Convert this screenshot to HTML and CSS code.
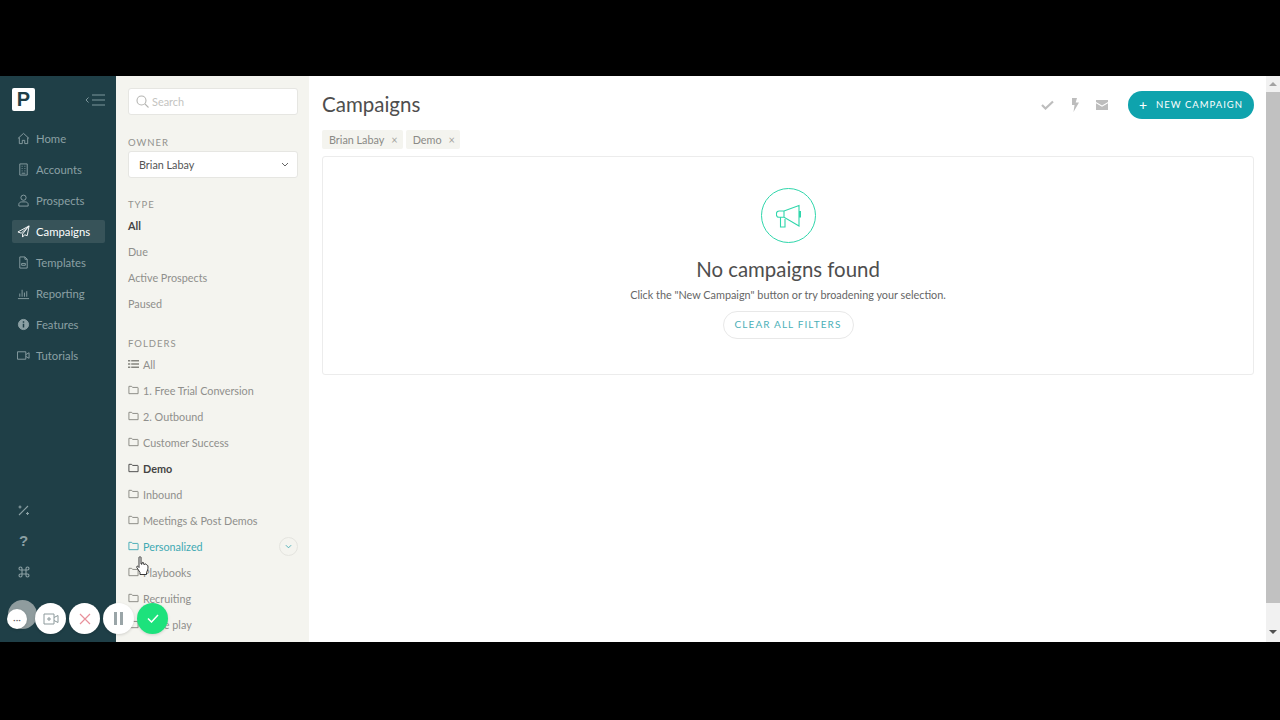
FILE: index.html
```html
<!DOCTYPE html>
<html lang="en">
<head>
    <meta charset="UTF-8">
    <meta name="viewport" content="width=device-width, initial-scale=1.0">
    <title>Campaigns</title>
    <link rel="stylesheet" href="styles.css">
</head>
<body>
    <div class="app">
        <!-- Main nav -->
        <nav class="sidebar">
            <div class="brand">
                <div class="logo">P</div>
                <svg class="collapse" width="20" height="12" viewBox="0 0 20 12" fill="none" stroke="#7d979c" stroke-width="1"><path d="M3.500 3.500 1 6l2.500 2.500M7 1h13M7 6h13M7 11h13"/></svg>
            </div>
            <a class="nav-item"><svg viewBox="0 0 14 14"><path d="M1 7 7 1.500 13 7M2.500 6v6.500h3.200V9h2.600v3.500h3.200V6"/></svg>Home</a>
            <a class="nav-item"><svg viewBox="0 0 14 14"><path d="M3 1h8v12H3zM5 3.500h1M8 3.500h1M5 6h1M8 6h1M5 8.500h1M8 8.500h1M5 11h4"/></svg>Accounts</a>
            <a class="nav-item"><svg viewBox="0 0 14 14"><circle cx="7" cy="4" r="2.800"/><path d="M2 13v-2c0-1.500 1.500-2.500 3-2.500h4c1.500 0 3 1 3 2.500v2z"/></svg>Prospects</a>
            <a class="nav-item active"><svg viewBox="0 0 14 14"><path d="M13 1 1 7.500l3.500 1.300L13 1 6 9.700V13l2.200-2.500 2.800 1z"/></svg>Campaigns</a>
            <a class="nav-item"><svg viewBox="0 0 14 14"><path d="M3 1h5.500L11 3.500V13H3zM8.500 1v2.500H11M5 8h4v2H5z"/></svg>Templates</a>
            <a class="nav-item"><svg viewBox="0 0 14 14"><path d="M1 12.500h12M3 10.500V7M5.500 10.500V3M8 10.500V6M10.500 10.500V4.500"/></svg>Reporting</a>
            <a class="nav-item"><svg viewBox="0 0 14 14"><circle class="solid" cx="7" cy="7" r="5.500"/><path class="cut" d="M7 6.200v4M7 3.600v1.400"/></svg>Features</a>
            <a class="nav-item"><svg viewBox="0 0 14 14"><path d="M0.500 3h9v8h-9zM9.500 6l3.500-2v6L9.500 8"/></svg>Tutorials</a>
            <div class="nav-bottom">
                <svg viewBox="0 0 14 14"><path d="M2 12 11 3M3 2.500v3M1.500 4h3M10.500 9v3M9 10.500h3"/></svg>
                <span class="help">?</span>
                <svg viewBox="0 0 14 14"><path d="M5 5h4v4H5zM5 5H3.500A1.500 1.500 0 1 1 5 3.500zM9 5V3.500A1.500 1.500 0 1 1 10.500 5zM9 9h1.500A1.500 1.500 0 1 1 9 10.500zM5 9v1.500A1.500 1.500 0 1 1 3.500 9z"/></svg>
            </div>
        </nav>

        <!-- Filters -->
        <aside class="filters">
            <div class="search">
                <svg width="13" height="13" viewBox="0 0 13 13" fill="none" stroke="#b5b5b2" stroke-width="1.100"><circle cx="5.500" cy="5.500" r="4.500"/><path d="m9 9 3.500 3.500"/></svg>
                Search
            </div>
            <div class="label owner-label">OWNER</div>
            <div class="select">
                Brian Labay
                <svg width="8" height="5" viewBox="0 0 8 5" fill="none" stroke="#666" stroke-width="1"><path d="m1 1 3 3 3-3"/></svg>
            </div>
            <div class="label type-label">TYPE</div>
            <ul class="type-list">
                <li class="current">All</li>
                <li>Due</li>
                <li>Active Prospects</li>
                <li>Paused</li>
            </ul>
            <div class="label folders-label">FOLDERS</div>
            <ul class="folder-list">
                <li><svg class="folder list-icon" viewBox="0 0 12 10"><path d="M0 1.500h2.500M0 5h2.500M0 8.500h2.500M3.500 1.500H12M3.500 5H12M3.500 8.500H12"/></svg>All</li>
                <li><svg class="folder" viewBox="0 0 12 10"><path d="M1 1h3l1 1.200h5.500a.5.5 0 0 1 .5.5V9H1z"/></svg>1. Free Trial Conversion</li>
                <li><svg class="folder" viewBox="0 0 12 10"><path d="M1 1h3l1 1.200h5.500a.5.5 0 0 1 .5.5V9H1z"/></svg>2. Outbound</li>
                <li><svg class="folder" viewBox="0 0 12 10"><path d="M1 1h3l1 1.200h5.500a.5.5 0 0 1 .5.5V9H1z"/></svg>Customer Success</li>
                <li class="current"><svg class="folder" viewBox="0 0 12 10"><path d="M1 1h3l1 1.200h5.500a.5.5 0 0 1 .5.5V9H1z"/></svg>Demo</li>
                <li><svg class="folder" viewBox="0 0 12 10"><path d="M1 1h3l1 1.200h5.500a.5.5 0 0 1 .5.5V9H1z"/></svg>Inbound</li>
                <li><svg class="folder" viewBox="0 0 12 10"><path d="M1 1h3l1 1.200h5.500a.5.5 0 0 1 .5.5V9H1z"/></svg>Meetings &amp; Post Demos</li>
                <li class="hover">
                    <svg class="folder" viewBox="0 0 12 10"><path d="M1 1h3l1 1.200h5.500a.5.5 0 0 1 .5.5V9H1z"/></svg>Personalized
                    <span class="expand"><svg width="7" height="5" viewBox="0 0 8 5" fill="none" stroke="#3ea9b3" stroke-width="1"><path d="m1 1 3 3 3-3"/></svg></span>
                </li>
                <li><svg class="folder" viewBox="0 0 12 10"><path d="M1 1h3l1 1.200h5.500a.5.5 0 0 1 .5.5V9H1z"/></svg>Playbooks</li>
                <li><svg class="folder" viewBox="0 0 12 10"><path d="M1 1h3l1 1.200h5.500a.5.5 0 0 1 .5.5V9H1z"/></svg>Recruiting</li>
                <li><svg class="folder" viewBox="0 0 12 10"><path d="M1 1h3l1 1.200h5.500a.5.5 0 0 1 .5.5V9H1z"/></svg>Some play</li>
            </ul>
        </aside>

        <!-- Content -->
        <main class="content">
            <div class="header">
                <h1>Campaigns</h1>
                <div class="actions">
                    <svg width="13" height="10" viewBox="0 0 13 10" fill="none" stroke="#bdbdbd" stroke-width="2.200"><path d="m1 5 3.500 3.500L12 1.500"/></svg>
                    <svg width="8" height="14" viewBox="0 0 8 14" fill="#bdbdbd"><path d="M1 0h5L4.700 4.500H8L2.500 14l1-7H1z"/></svg>
                    <svg width="12" height="10" viewBox="0 0 12 10" fill="#bdbdbd"><path d="M0 0h12v2L6 5.500 0 2zM0 3.300 6 6.800l6-3.500V10H0z"/></svg>
                    <button class="new-btn"><span class="plus">+</span>NEW CAMPAIGN</button>
                </div>
            </div>
            <div class="chips">
                <span class="chip">Brian Labay<span class="x">×</span></span>
                <span class="chip">Demo<span class="x">×</span></span>
            </div>
            <section class="card">
                <div class="empty-icon">
                    <svg width="25" height="24" viewBox="0 0 25 24" fill="none" stroke="#2fd6ab" stroke-width="1.100"><path d="M8 7H3a2.500 3 0 0 0 0 6.300h5zM8 7l15-5.500v20.500L8 13.300zM4.500 13.300V23H9v-9.500"/><path d="M24 7v6.500" stroke-width="2"/></svg>
                </div>
                <h2>No campaigns found</h2>
                <p>Click the "New Campaign" button or try broadening your selection.</p>
                <button class="clear-btn">CLEAR ALL FILTERS</button>
            </section>
        </main>

        <div class="scrollbar">
            <span class="arrow up"></span>
            <span class="thumb"></span>
            <span class="arrow down"></span>
        </div>

        <!-- Recorder controls lying over the page -->
        <div class="avatar"></div>
        <div class="recorder">
            <span class="round more">···</span>
            <span class="round"><svg width="16" height="12" viewBox="0 0 16 12" fill="none" stroke="#8d9a9c" stroke-width="1"><path d="M1 1h10v10H1zM11 4.500 15 2.500v7l-4-2M6 4v4M4 6h4"/></svg></span>
            <span class="round"><svg width="12" height="12" viewBox="0 0 12 12" fill="none" stroke="#e8909b" stroke-width="1.200"><path d="m1 1 10 10M11 1 1 11"/></svg></span>
            <span class="round"><svg width="9" height="13" viewBox="0 0 9 13" fill="#9aa5a8"><path d="M0 0h3v13H0zM6 0h3v13H6z"/></svg></span>
            <span class="round done"><svg width="12" height="9" viewBox="0 0 12 9" fill="none" stroke="#fff" stroke-width="1.500"><path d="m1 4.500 3.500 3.500L11 1"/></svg></span>
        </div>
        <svg class="cursor" width="13" height="20" viewBox="0 0 13 20"><path d="M3 1.500c0-1 2-1 2 0V8l1 .2V7c0-.8 1.600-.8 1.700 0v1.300l1 .2c0-.8 1.500-.8 1.600 0l.9.500c.7.500.8 1 .8 2 0 2-.5 3.500-1.500 5.500v2H4v-2L.8 11.500c-.6-1 .6-1.800 1.300-1L3 11.500z" fill="#fff" stroke="#222" stroke-width="0.900"/></svg>
    </div>
</body>
</html>
```

FILE: styles.css
```css
* {
    box-sizing: border-box;
    margin: 0;
    padding: 0;
}

body {
    height: 720px;
    padding: 76px 0 78px;
    background-color: #000;
    font-family: Lato, "Liberation Sans", sans-serif;
    font-size: 11px;
    overflow: hidden;
}

ul {
    list-style: none;
}

.app {
    position: relative;
    display: flex;
    height: 566px;
    background-color: #fff;
    overflow: hidden;
}

/* Main nav */
.sidebar {
    display: flex;
    flex-direction: column;
    width: 116px;
    flex-shrink: 0;
    padding: 12px 11px 0 12px;
    background-color: #1f3f47;
}

.brand {
    display: flex;
    justify-content: space-between;
    align-items: center;
    height: 23px;
    margin-bottom: 16px;
}

.logo {
    width: 23px;
    height: 23px;
    border-radius: 2px;
    background-color: #fff;
    color: #1f3f47;
    font-family: "Liberation Sans", sans-serif;
    font-size: 20px;
    font-weight: bold;
    line-height: 23px;
    text-align: center;
}

.nav-item {
    display: flex;
    align-items: center;
    gap: 6px;
    height: 23px;
    margin-bottom: 8px;
    padding-left: 5px;
    border-radius: 2px;
    color: #8ba0a4;
    font-size: 11.300px;
}

.nav-item svg {
    width: 13px;
    height: 13px;
    fill: none;
    stroke: #8ba0a4;
    stroke-width: 1;
}

.nav-item .solid {
    fill: #8ba0a4;
}

.nav-item .cut {
    stroke: #1f3f47;
    stroke-width: 1.600;
}

.nav-item.active {
    background-color: #375359;
    color: #fff;
}

.nav-item.active svg {
    stroke: #fff;
}

.nav-bottom {
    display: flex;
    flex-direction: column;
    align-items: center;
    gap: 17px;
    width: 23px;
    margin-top: 128px;
    color: #8ba0a4;
}

.nav-bottom svg {
    width: 14px;
    height: 14px;
    fill: none;
    stroke: #8ba0a4;
    stroke-width: 1.100;
}

.help {
    height: 14px;
    font-family: "Liberation Sans", sans-serif;
    font-size: 15px;
    font-weight: bold;
    line-height: 14px;
}

/* Filters */
.filters {
    width: 193px;
    flex-shrink: 0;
    padding: 12px 11px 0 12px;
    background-color: #f4f4ef;
    overflow: hidden;
}

.search {
    display: flex;
    align-items: center;
    gap: 3px;
    height: 27px;
    padding-left: 7px;
    border: 1px solid #e6e6e2;
    border-radius: 3px;
    background-color: #fff;
    color: #c4c4c1;
    font-size: 10.900px;
}

.label {
    color: #92928e;
    font-size: 9.500px;
    letter-spacing: 1px;
    line-height: 12px;
}

.owner-label {
    margin-top: 22px;
}

.select {
    display: flex;
    justify-content: space-between;
    align-items: center;
    height: 27px;
    margin-top: 2px;
    padding: 0 8px 1px 10px;
    border: 1px solid #e6e6e2;
    border-radius: 3px;
    background-color: #fff;
    color: #555;
    font-size: 10.800px;
}

.type-label {
    margin-top: 21px;
}

.type-list {
    margin-top: 2px;
}

.type-list li {
    height: 26px;
    color: #8f8f8c;
    font-size: 10.800px;
    line-height: 26px;
}

.type-list li.current {
    color: #444;
    font-weight: bold;
}

.folders-label {
    margin-top: 21px;
}

.folder-list {
    margin-top: 1px;
}

.folder-list li {
    display: flex;
    align-items: center;
    position: relative;
    height: 26px;
    color: #8f8f8c;
    font-size: 10.800px;
}

.folder {
    width: 11px;
    height: 10px;
    margin-right: 4px;
    fill: none;
    stroke: #85857f;
    stroke-width: 1;
}

.list-icon {
    stroke-width: 1.600;
}

.folder-list li.current {
    color: #444;
    font-weight: bold;
}

.folder-list li.current .folder {
    stroke: #444;
}

.folder-list li.hover {
    color: #3ea9b3;
}

.folder-list li.hover .folder {
    stroke: #3ea9b3;
}

.expand {
    display: flex;
    justify-content: center;
    align-items: center;
    position: absolute;
    right: 0;
    top: 4px;
    width: 19px;
    height: 19px;
    border: 1px solid #e4e4df;
    border-radius: 50%;
}

/* Content */
.content {
    flex: 1;
    padding: 15px 12px 0 13px;
}

.header {
    display: flex;
    justify-content: space-between;
    align-items: center;
    height: 28px;
}

h1 {
    margin-bottom: 2px;
    color: #4e4e4e;
    font-size: 20.500px;
    font-weight: 400;
}

.actions {
    display: flex;
    align-items: center;
    gap: 17px;
}

.new-btn {
    display: flex;
    align-items: center;
    justify-content: center;
    width: 126px;
    height: 28px;
    margin-left: 3px;
    padding-bottom: 1px;
    border: none;
    border-radius: 14px;
    background-color: #0fa3ad;
    color: #fff;
    font-family: inherit;
    font-size: 9.500px;
    letter-spacing: 1px;
}

.plus {
    margin-right: 8px;
    font-size: 14px;
    line-height: 14px;
}

.chips {
    display: flex;
    gap: 3px;
    margin-top: 11px;
}

.chip {
    display: flex;
    align-items: center;
    height: 19px;
    padding: 0 5px 1px 7px;
    border-radius: 2px;
    background-color: #f4f4ef;
    color: #8a8a86;
    font-size: 10.800px;
}

.x {
    margin-left: 7px;
    color: #a5a5a0;
    font-size: 11px;
}

.card {
    display: flex;
    flex-direction: column;
    align-items: center;
    height: 219px;
    margin-top: 7px;
    padding-top: 31px;
    border: 1px solid #ececec;
    border-radius: 3px;
}

.empty-icon {
    display: flex;
    justify-content: center;
    align-items: center;
    width: 55px;
    height: 55px;
    border: 1.500px solid #2fd6ab;
    border-radius: 50%;
}

h2 {
    margin-top: 14px;
    color: #4e4e4e;
    font-size: 20.400px;
    font-weight: 400;
    line-height: 24px;
}

.card p {
    margin-top: 7px;
    color: #666;
    font-size: 10.850px;
    line-height: 14px;
}

.clear-btn {
    width: 131px;
    height: 28px;
    margin-top: 9px;
    padding-bottom: 3px;
    border: 1px solid #e8e8e8;
    border-radius: 14px;
    background-color: #fff;
    color: #4bb0b8;
    font-family: inherit;
    font-size: 10px;
    letter-spacing: 1.100px;
}

/* Page scrollbar */
.scrollbar {
    display: flex;
    flex-direction: column;
    align-items: center;
    width: 14px;
    flex-shrink: 0;
    background-color: #f1f1f1;
}

.arrow {
    width: 0;
    height: 0;
    margin: 6px 0;
    border-left: 4px solid transparent;
    border-right: 4px solid transparent;
}

.arrow.up {
    border-bottom: 4px solid #a3a3a3;
}

.arrow.down {
    margin-top: 27px;
    border-top: 4px solid #505050;
}

.thumb {
    width: 14px;
    height: 511px;
    background-color: #c1c1c1;
}

/* Recorder controls */
.avatar {
    position: absolute;
    left: 8px;
    top: 524px;
    width: 29px;
    height: 29px;
    border-radius: 50%;
    background-color: #8f9c9e;
}

.recorder {
    display: flex;
    position: absolute;
    left: 7px;
    top: 527px;
    gap: 3px;
}

.round {
    display: flex;
    justify-content: center;
    align-items: center;
    width: 31px;
    height: 31px;
    border-radius: 50%;
    background-color: #fff;
    box-shadow: 0 1px 3px rgba(0, 0, 0, 0.15);
}

.more {
    width: 20px;
    height: 20px;
    margin: 6px 5px 0 0;
    color: #666;
    font-size: 10px;
}

.done {
    background-color: #1de27c;
}

.cursor {
    position: absolute;
    left: 136px;
    top: 480px;
}
```
